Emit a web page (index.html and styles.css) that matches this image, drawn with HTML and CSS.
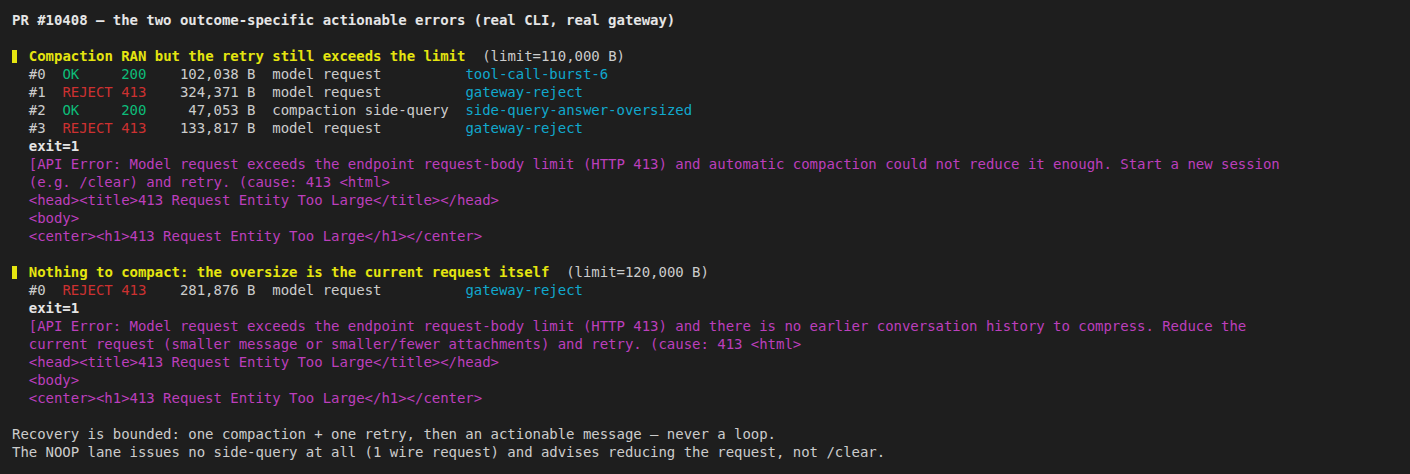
FILE: index.html
```html
<!DOCTYPE html>
<html lang="en">
<head>
<meta charset="utf-8">
<title>PR #10408</title>
<link rel="stylesheet" href="styles.css">
</head>
<body>
<main class="term">
<div class="line b">PR #10408 — the two outcome-specific actionable errors (real CLI, real gateway)</div>
<div class="line"> </div>
<div class="line"><span class="bar"></span> <span class="hdr">Compaction RAN but the retry still exceeds the limit</span>  (limit=110,000 B)</div>
<div class="line">  #0  <span class="g">OK</span>     <span class="g">200</span>    102,038 B  model request          <span class="c">tool-call-burst-6</span></div>
<div class="line">  #1  <span class="r">REJECT 413</span>    324,371 B  model request          <span class="c">gateway-reject</span></div>
<div class="line">  #2  <span class="g">OK</span>     <span class="g">200</span>     47,053 B  compaction side-query  <span class="c">side-query-answer-oversized</span></div>
<div class="line">  #3  <span class="r">REJECT 413</span>    133,817 B  model request          <span class="c">gateway-reject</span></div>
<div class="line b">  exit=1</div>
<div class="line m">  [API Error: Model request exceeds the endpoint request-body limit (HTTP 413) and automatic compaction could not reduce it enough. Start a new session</div>
<div class="line m">  (e.g. /clear) and retry. (cause: 413 &lt;html&gt;</div>
<div class="line m">  &lt;head&gt;&lt;title&gt;413 Request Entity Too Large&lt;/title&gt;&lt;/head&gt;</div>
<div class="line m">  &lt;body&gt;</div>
<div class="line m">  &lt;center&gt;&lt;h1&gt;413 Request Entity Too Large&lt;/h1&gt;&lt;/center&gt;</div>
<div class="line"> </div>
<div class="line"><span class="bar"></span> <span class="hdr">Nothing to compact: the oversize is the current request itself</span>  (limit=120,000 B)</div>
<div class="line">  #0  <span class="r">REJECT 413</span>    281,876 B  model request          <span class="c">gateway-reject</span></div>
<div class="line b">  exit=1</div>
<div class="line m">  [API Error: Model request exceeds the endpoint request-body limit (HTTP 413) and there is no earlier conversation history to compress. Reduce the</div>
<div class="line m">  current request (smaller message or smaller/fewer attachments) and retry. (cause: 413 &lt;html&gt;</div>
<div class="line m">  &lt;head&gt;&lt;title&gt;413 Request Entity Too Large&lt;/title&gt;&lt;/head&gt;</div>
<div class="line m">  &lt;body&gt;</div>
<div class="line m">  &lt;center&gt;&lt;h1&gt;413 Request Entity Too Large&lt;/h1&gt;&lt;/center&gt;</div>
<div class="line"> </div>
<div class="line">Recovery is bounded: one compaction + one retry, then an actionable message — never a loop.</div>
<div class="line">The NOOP lane issues no side-query at all (1 wire request) and advises reducing the request, not /clear.</div>
</main>
</body>
</html>
```
FILE: styles.css
```css
html, body {
  margin: 0;
  padding: 0;
  background: #1e1e1e;
  height: 100%;
}
.term {
  padding: 11px 12px 0 12px;
  font-family: "DejaVu Sans Mono", monospace;
  font-size: 14px;
  line-height: 18px;
  letter-spacing: -0.033px;
  color: #cccccc;
}
.line {
  white-space: pre;
  height: 18px;
}
.b { font-weight: bold; color: #e5e5e5; }
.hdr { font-weight: bold; color: #e5e510; }
.g { color: #0dbc79; }
.r { color: #cd3131; }
.c { color: #11a8cd; }
.m { color: #bc3fbc; }
.bar {
  display: inline-block;
  width: 1ch;
  height: 18px;
  vertical-align: top;
  background: linear-gradient(#e5e510, #e5e510) no-repeat 0 3px / 5px 13px;
}
```
